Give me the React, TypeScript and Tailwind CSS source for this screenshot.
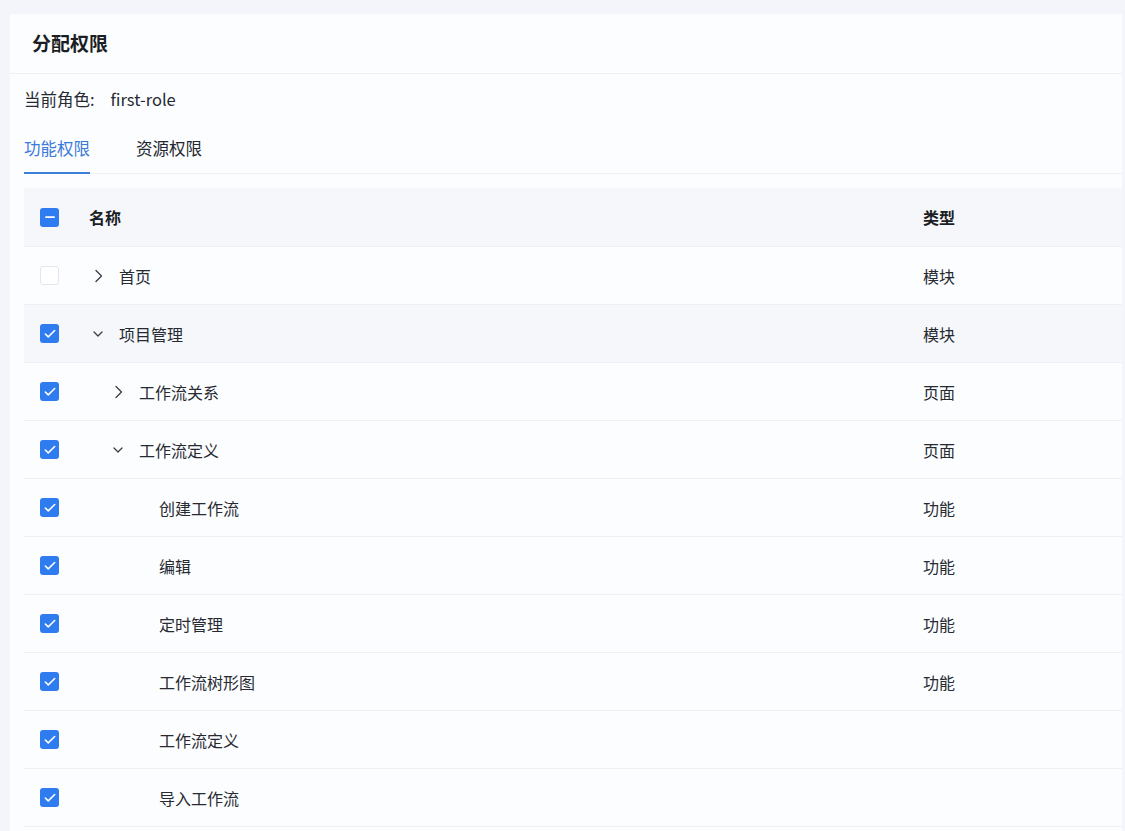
import { Check, Minus } from "lucide-react";

interface Row {
    name: string;
    type: string;
    level: number;
    expand?: "open" | "closed";
    checked: boolean;
    hover?: boolean;
}

const rows: Row[] = [
    { name: "首页", type: "模块", level: 0, expand: "closed", checked: false },
    { name: "项目管理", type: "模块", level: 0, expand: "open", checked: true, hover: true },
    { name: "工作流关系", type: "页面", level: 1, expand: "closed", checked: true },
    { name: "工作流定义", type: "页面", level: 1, expand: "open", checked: true },
    { name: "创建工作流", type: "功能", level: 2, checked: true },
    { name: "编辑", type: "功能", level: 2, checked: true },
    { name: "定时管理", type: "功能", level: 2, checked: true },
    { name: "工作流树形图", type: "功能", level: 2, checked: true },
    { name: "工作流定义", type: "", level: 2, checked: true },
    { name: "导入工作流", type: "", level: 2, checked: true },
];

function Box({ state }: { state: "on" | "off" | "some" }) {
    if (state === "off") {
        return <span className="w-[19px] h-[19px] rounded-[3px] border border-[#e3e6ec] bg-white block" />;
    }
    return (
        <span className="w-[19px] h-[19px] rounded-[3px] bg-[#2f7cf0] flex items-center justify-center">
            {state === "on" ? (
                <Check size={14} strokeWidth={2.75} color="#fff" />
            ) : (
                <Minus size={14} strokeWidth={3} color="#fff" />
            )}
        </span>
    );
}

function Arrow({ open }: { open: boolean }) {
    return open ? (
        <svg width="14" height="14" viewBox="0 0 14 14" fill="none" stroke="currentColor" strokeWidth="1.3" strokeLinecap="round" strokeLinejoin="round">
            <polyline points="3,5 7,9 11,5" />
        </svg>
    ) : (
        <svg width="14" height="14" viewBox="0 0 14 14" fill="none" stroke="currentColor" strokeWidth="1.3" strokeLinecap="round" strokeLinejoin="round">
            <polyline points="5,1.5 10.5,7 5,12.5" />
        </svg>
    );
}

export default function App() {
    return (
        <div
            className="min-h-screen w-full bg-[#f3f5fa] pt-[14px] pl-[10px] pr-[3px] text-[#262a31]"
            style={{ fontFamily: '"Noto Sans CJK SC", "Noto Sans", sans-serif' }}
        >
            <div className="bg-[#fcfdff] rounded-t-[2px] min-h-[817px]">
                {/* Header */}
                <div className="h-[60px] flex items-center px-[22px] border-b border-[#eff1f6]">
                    <h1 className="text-[19px] font-semibold text-[#1b1e24]">分配权限</h1>
                </div>

                <div className="pl-[14px]">
                    <div className="h-[50px] flex items-center text-[16.5px] pt-[1px]">
                        <span>当前角色:</span>
                        <span className="ml-[16px]">first-role</span>
                    </div>

                    {/* Tabs */}
                    <div className="flex h-[50px] border-b border-[#eef0f5] text-[16.5px]">
                        <div className="relative flex items-center text-[#3a7ad8]">
                            功能权限
                            <span className="absolute left-0 right-0 bottom-[-1px] h-[2px] bg-[#3a80d8]" />
                        </div>
                        <div className="flex items-center ml-[46px] text-[#23272e]">资源权限</div>
                    </div>

                    {/* Table */}
                    <div className="mt-[14px] text-[16px]">
                        <div className="h-[59px] flex items-center bg-[#f5f7fb] border-b border-[#eef0f5] font-semibold text-[#1b1e24]">
                            <div className="w-[65px] pl-[16px]">
                                <Box state="some" />
                            </div>
                            <div className="flex-1">名称</div>
                            <div className="w-[199px]">类型</div>
                        </div>
                        {rows.map((r, i) => (
                            <div
                                key={i}
                                className={`h-[58px] flex items-center border-b border-[#eef0f5] ${r.hover ? "bg-[#f5f7fb]" : "bg-[#fcfdff]"}`}
                            >
                                <div className="w-[65px] pl-[16px]">
                                    <Box state={r.checked ? "on" : "off"} />
                                </div>
                                <div className="flex-1 flex items-center">
                                    <span style={{ width: r.level * 20 }} />
                                    <span className="w-[30px] flex items-center pl-[2px] text-[#3a3e45]">
                                        {r.expand && <Arrow open={r.expand === "open"} />}
                                    </span>
                                    <span>{r.name}</span>
                                </div>
                                <div className="w-[199px]">{r.type}</div>
                            </div>
                        ))}
                    </div>
                </div>
            </div>
        </div>
    );
}
